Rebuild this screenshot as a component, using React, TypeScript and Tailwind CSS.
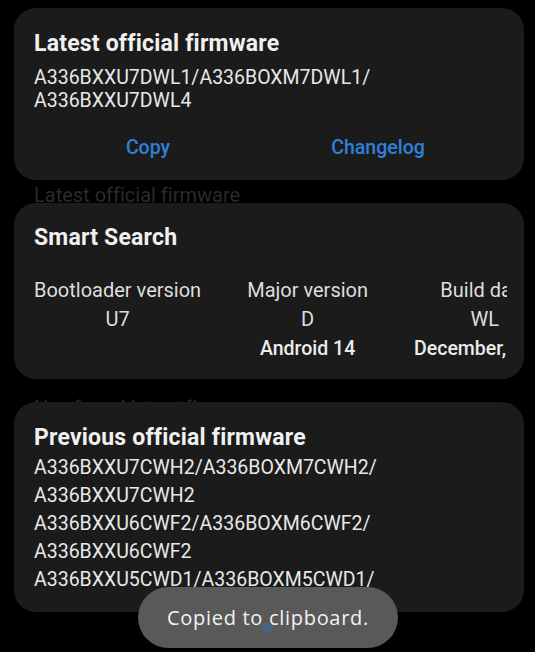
const latest = ['A336BXXU7DWL1/A336BOXM7DWL1/', 'A336BXXU7DWL4'];

const previous = [
  'A336BXXU7CWH2/A336BOXM7CWH2/',
  'A336BXXU7CWH2',
  'A336BXXU6CWF2/A336BOXM6CWF2/',
  'A336BXXU6CWF2',
  'A336BXXU5CWD1/A336BOXM5CWD1/',
];

const smartSearch = [
  { label: 'Bootloader version', value: 'U7', extra: '' },
  { label: 'Major version', value: 'D', extra: 'Android 14' },
  { label: 'Build date', value: 'WL', extra: 'December, 2023' },
];

export default function App() {
  return (
    <main
      className="relative min-h-screen bg-black text-[#e8e8e8] overflow-hidden [font-variant-ligatures:none]"
      style={{ fontFamily: 'Roboto, "Noto Sans", sans-serif' }}
    >
      <div className="pt-[8px] ml-[14px] w-[510px]">
        {/* latest firmware */}
        <section className="relative z-10 bg-[#1b1b1b] rounded-[22px] px-[20px] pt-[22px] pb-[20px]">
          <h2 className="text-[23px] leading-[28px] font-bold tracking-[0.2px] text-[#f0f0f0]">Latest official firmware</h2>
          <div className="mt-[9px] text-[19.5px] leading-[22.5px]">
            {latest.map((line) => (
              <div key={line}>{line}</div>
            ))}
          </div>
          <div className="mt-[24px] grid grid-cols-2 w-[460px] -ml-[1px] text-[19.5px] leading-[24px] font-medium text-[#2f80dc]">
            <button className="text-center">Copy</button>
            <button className="text-center">Changelog</button>
          </div>
        </section>

        <div className="h-[23px] pt-[3px] pl-[20px] text-[20px] leading-[24px] text-[#2a2a2a] whitespace-nowrap">
          Latest official firmware
        </div>

        {/* smart search */}
        <section className="relative z-10 bg-[#1b1b1b] rounded-[22px] pl-[20px] pr-[17px] pt-[21px] pb-[16px]">
          <h2 className="text-[23px] leading-[28px] font-bold tracking-[0.2px] text-[#f0f0f0]">Smart Search</h2>
          <div className="mt-[24px] overflow-hidden">
            <div className="flex gap-[46px] whitespace-nowrap text-[20px] leading-[29px]">
              {smartSearch.map((col) => (
                <div key={col.label} className="flex flex-col items-center shrink-0">
                  <div className="text-[#dedede]">{col.label}</div>
                  <div className="text-[#dedede]">{col.value}</div>
                  <div className="font-medium text-[19.5px] text-[#ececec] h-[29px]">{col.extra}</div>
                </div>
              ))}
            </div>
          </div>
        </section>

        <div className="h-[23px] pt-[17px] pl-[20px] text-[20px] leading-[24px] text-[#2a2a2a] whitespace-nowrap">
          Newfound latest firmware
        </div>

        {/* previous firmware */}
        <section className="relative z-10 bg-[#1b1b1b] rounded-[22px] px-[20px] pt-[22px] pb-[18px]">
          <h2 className="text-[23px] leading-[28px] font-bold tracking-[0.2px] text-[#f0f0f0]">Previous official firmware</h2>
          <div className="mt-[2px] text-[19.5px] leading-[28px]">
            {previous.map((line, i) => (
              <div key={i}>{line}</div>
            ))}
          </div>
        </section>
      </div>

      {/* toast */}
      <div className="absolute z-20 bottom-[4px] left-[138px] w-[260px] h-[61px] rounded-full bg-[#595959] flex items-center justify-center">
        <span
          className="text-[20px] tracking-[0.7px] text-[#f2f2f2]"
          style={{ fontFamily: '"Open Sans", Roboto, sans-serif' }}
        >
          Copied to clipboard.
        </span>
        <span className="absolute left-[124px] top-[36px] w-[10px] h-[10px] rounded-full bg-[#3b6fa8] opacity-60" />
      </div>
    </main>
  );
}
